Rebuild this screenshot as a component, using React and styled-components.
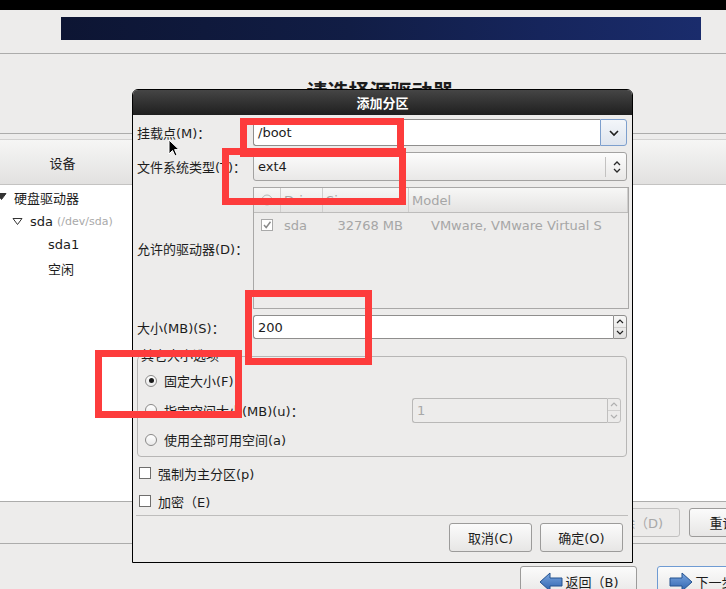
import styled, { createGlobalStyle } from "styled-components";

const GlobalStyle = createGlobalStyle`
  html, body {
    margin: 0;
    padding: 0;
    background: #edeceb;
    overflow: hidden;
  }
  body {
    font-family: "DejaVu Sans", "Noto Sans CJK SC", sans-serif;
    font-size: 13px;
    color: #1c1c1c;
  }
`;

const Screen = styled.div`
  position: relative;
  width: 726px;
  height: 589px;
  overflow: hidden;
  background: #edeceb;
`;

const TopBar = styled.div`
  height: 10px;
  background: #000;
`;

const BannerRow = styled.div`
  padding: 7px 0 13px 61px;
`;

const Banner = styled.div`
  width: 640px;
  height: 23px;
  background: linear-gradient(90deg, #0d1533 0%, #111d45 45%, #16255c 75%, #1a2c6c 100%);
`;

const Rule = styled.div`
  height: 1px;
  background: #acacab;
`;

const TitleRow = styled.div`
  height: 79px;
  box-sizing: border-box;
  padding: 25px 0 0 34px;
  text-align: center;
  font-size: 21px;
  line-height: 26px;
  font-weight: bold;
`;

const DevicePanel = styled.div`
  padding-top: 5px;
`;

const DeviceHeader = styled.div`
  height: 46px;
  box-sizing: border-box;
  display: flex;
  align-items: center;
  background: linear-gradient(#f6f6f5, #e2e1e0);
  border-top: 1px solid #d2d1d0;
  border-bottom: 1px solid #c4c3c2;
`;

const HeaderCell = styled.div`
  width: ${(p) => p.$w}px;
  text-align: center;
`;

const DeviceList = styled.div`
  height: 316px;
  padding-top: 1px;
  box-sizing: border-box;
  background: #fff;
`;

const TreeRow = styled.div`
  height: 23.5px;
  display: flex;
  align-items: center;
  padding-left: ${(p) => p.$indent}px;
  gap: 7px;
`;

const Hint = styled.span`
  color: #a9a9a9;
  font-size: 11px;
  margin-left: -3px;
`;

const ActionRow = styled.div`
  height: 41px;
  display: flex;
  align-items: center;
  gap: 9px;
  padding-left: 592px;
`;

const NavRow = styled.div`
  display: flex;
  gap: 20px;
  padding: 22px 0 0 520px;
`;

const PageButton = styled.div`
  flex: none;
  width: ${(p) => p.$w}px;
  height: ${(p) => p.$h}px;
  box-sizing: border-box;
  display: flex;
  align-items: center;
  justify-content: center;
  gap: 3px;
  border: 1px solid ${(p) => (p.$focus ? "#6f9bd3" : p.$disabled ? "#c2c1c0" : "#9c9b9a")};
  border-radius: 3px;
  background: ${(p) => (p.$disabled ? "#ecebea" : "linear-gradient(#fbfbfb, #e7e6e5)")};
  color: ${(p) => (p.$disabled ? "#a8a8a8" : "#1c1c1c")};
  white-space: nowrap;
`;

/* ---------- dialog ---------- */

const Dialog = styled.div`
  position: absolute;
  left: 132px;
  top: 89px;
  width: 501px;
  height: 474px;
  box-sizing: border-box;
  border: 1px solid #000;
  border-radius: 6px 6px 0 0;
  background: #edeceb;
  display: flex;
  flex-direction: column;
  overflow: hidden;
`;

const TitleBar = styled.div`
  height: 24px;
  flex: none;
  display: flex;
  align-items: center;
  justify-content: center;
  padding-bottom: 1px;
  background: linear-gradient(#454545, #1f1f1f);
  color: #fff;
  font-weight: bold;
  font-size: 13px;
`;

const Body = styled.div`
  padding: 4px 5px 0 4px;
  display: flex;
  flex-direction: column;
`;

const FormGrid = styled.div`
  display: grid;
  grid-template-columns: 116px 1fr;
  grid-template-rows: 27px 29px 122px 24px;
  row-gap: 6px;
  align-items: center;
`;

const Label = styled.div`
  white-space: nowrap;
`;

const ComboEntry = styled.div`
  height: 27px;
  display: flex;
`;

const EntryField = styled.div`
  flex: 1;
  box-sizing: border-box;
  display: flex;
  align-items: center;
  padding-left: 4px;
  background: ${(p) => (p.$disabled ? "#edeceb" : "#fff")};
  color: ${(p) => (p.$disabled ? "#a8a8a8" : "#1c1c1c")};
  border: 1px solid ${(p) => (p.$disabled ? "#b9b8b7" : "#8f8e8d")};
  border-right: none;
  border-radius: 3px 0 0 3px;
`;

const DropButton = styled.div`
  width: 27px;
  box-sizing: border-box;
  display: flex;
  align-items: center;
  justify-content: center;
  border: 1px solid #7d9fcd;
  border-radius: 0 3px 3px 0;
  background: linear-gradient(#f3f6fa, #dfe5ee);
`;

const ComboButton = styled.div`
  height: 29px;
  box-sizing: border-box;
  display: flex;
  align-items: center;
  padding-left: 4px;
  border: 1px solid #a3a2a1;
  border-radius: 3px;
  background: linear-gradient(#fcfcfc, #e9e8e7);
`;

const ComboText = styled.div`
  flex: 1;
`;

const ComboSep = styled.div`
  width: 1px;
  height: 20px;
  background: #c3c2c1;
  margin-right: 6px;
`;

const ComboIcon = styled.div`
  width: 14px;
  display: flex;
`;

const DriveTable = styled.div`
  height: 122px;
  box-sizing: border-box;
  border: 1px solid #a9a8a7;
  margin-right: -2px;
  color: #a6a6a6;
`;

const TableHead = styled.div`
  display: grid;
  grid-template-columns: 27px 42px 86px 1fr;
  height: 24px;
  background: linear-gradient(#f7f7f6, #e4e3e2);
  border-bottom: 1px solid #bdbcbb;
`;

const HeadCell = styled.div`
  display: flex;
  align-items: center;
  padding-left: ${(p) => p.$pad ?? 3}px;
  border-right: 1px solid #cfcecd;
  white-space: nowrap;
`;

const TableRow = styled.div`
  display: grid;
  grid-template-columns: 27px 42px 86px 1fr;
  height: 24px;
`;

const Cell = styled.div`
  display: flex;
  align-items: center;
  justify-content: ${(p) => (p.$right ? "flex-end" : "flex-start")};
  padding: 0 ${(p) => p.$pr ?? 0}px 0 ${(p) => p.$pl ?? 3}px;
  white-space: nowrap;
  overflow: hidden;
`;

const Spin = styled.div`
  height: ${(p) => p.$h}px;
  width: ${(p) => (p.$w ? `${p.$w}px` : "auto")};
  display: flex;
`;

const SpinButtons = styled.div`
  width: 14px;
  box-sizing: border-box;
  display: flex;
  flex-direction: column;
  border: 1px solid ${(p) => (p.$disabled ? "#c0bfbe" : "#8f8e8d")};
  border-radius: 0 3px 3px 0;
  background: ${(p) => (p.$disabled ? "#ecebea" : "linear-gradient(#f7f7f6, #e1e0df)")};
`;

const SpinHalf = styled.div`
  flex: 1;
  display: flex;
  align-items: center;
  justify-content: center;
  & + & {
    border-top: 1px solid ${(p) => (p.$disabled ? "#d0cfce" : "#b3b2b1")};
  }
`;

const Frame = styled.fieldset`
  margin: 9px 0 0 0;
  padding: 2px 5px 2px 7px;
  border: 1px solid #b7b6b5;
  border-radius: 4px;
  min-width: 0;
`;

const Legend = styled.legend`
  padding: 0 2px;
  margin-left: -6px;
  line-height: 16px;
`;

const OptionRow = styled.div`
  height: ${(p) => p.$h}px;
  display: flex;
  align-items: center;
  gap: 7px;
  padding-left: ${(p) => p.$pl ?? 0}px;
  margin-top: ${(p) => p.$mt ?? 0}px;
`;

const OptionText = styled.div`
  flex: 1;
  white-space: nowrap;
`;

const Radio = styled.div`
  width: 12px;
  height: 12px;
  box-sizing: border-box;
  border-radius: 50%;
  border: 1px solid #8a8988;
  background: linear-gradient(#ffffff, #e9e9e9);
  display: flex;
  align-items: center;
  justify-content: center;
  &::after {
    content: "";
    width: 5px;
    height: 5px;
    border-radius: 50%;
    background: ${(p) => (p.$on ? "#1a1a1a" : "transparent")};
  }
`;

const Check = styled.div`
  width: 12px;
  height: 12px;
  box-sizing: border-box;
  border: 1px solid ${(p) => (p.$disabled ? "#a9a9a9" : "#6f6e6d")};
  background: #fff;
  display: flex;
`;

const Separator = styled.div`
  height: 1px;
  margin: 2px -1px 0;
  background: #bebdbc;
`;

const DialogButtons = styled.div`
  display: flex;
  justify-content: flex-end;
  gap: 8px;
  padding: 7px 4px 0 0;
`;

/* ---------- overlays ---------- */

const Mark = styled.div`
  position: absolute;
  left: ${(p) => p.$x}px;
  top: ${(p) => p.$y}px;
  width: ${(p) => p.$w}px;
  height: ${(p) => p.$h}px;
  box-sizing: border-box;
  border: 7px solid #fd3c3c;
`;

const Pointer = styled.svg`
  position: absolute;
  left: 168px;
  top: 139px;
`;

function Expander({ filled }) {
  return (
    <svg width="11" height="11" viewBox="0 0 11 11">
      <polygon
        points="1,2.5 10,2.5 5.5,8.5"
        fill={filled ? "#333" : "#fff"}
        stroke="#333"
        strokeWidth="1"
        strokeLinejoin="round"
      />
    </svg>
  );
}

function NavArrow({ dir }) {
  const pts =
    dir === "left"
      ? "1,10 11,1 11,6 23,6 23,14 11,14 11,19"
      : "23,10 13,1 13,6 1,6 1,14 13,14 13,19";
  return (
    <svg width="24" height="20" viewBox="0 0 24 20">
      <defs>
        <linearGradient id={`g-${dir}`} x1="0" y1="0" x2="0" y2="1">
          <stop offset="0" stopColor="#7aa6e0" />
          <stop offset="1" stopColor="#2f63ae" />
        </linearGradient>
      </defs>
      <polygon points={pts} fill={`url(#g-${dir})`} stroke="#24528f" strokeWidth="1" strokeLinejoin="round" />
    </svg>
  );
}

function SpinArrow({ up, color }) {
  return (
    <svg width="8" height="5" viewBox="0 0 8 5">
      <path d={up ? "M1 4 L4 1 L7 4" : "M1 1 L4 4 L7 1"} fill="none" stroke={color} strokeWidth="1.2" />
    </svg>
  );
}

function SpinBox({ value, width, height, disabled }) {
  const c = disabled ? "#b0b0b0" : "#222";
  return (
    <Spin $w={width} $h={height}>
      <EntryField $disabled={disabled}>{value}</EntryField>
      <SpinButtons $disabled={disabled}>
        <SpinHalf $disabled={disabled}>
          <SpinArrow up color={c} />
        </SpinHalf>
        <SpinHalf $disabled={disabled}>
          <SpinArrow color={c} />
        </SpinHalf>
      </SpinButtons>
    </Spin>
  );
}

export default function App() {
  return (
    <>
      <GlobalStyle />
      <Screen>
        <TopBar />
        <BannerRow>
          <Banner />
        </BannerRow>
        <Rule />
        <TitleRow>请选择源驱动器</TitleRow>
        <Rule />
        <DevicePanel>
          <DeviceHeader>
            <HeaderCell $w={125}>设备</HeaderCell>
          </DeviceHeader>
          <DeviceList>
            <TreeRow $indent={0}>
              <span style={{ marginLeft: -4 }}>
                <Expander filled />
              </span>
              <span>硬盘驱动器</span>
            </TreeRow>
            <TreeRow $indent={12}>
              <Expander />
              <span>sda</span>
              <Hint>(/dev/sda)</Hint>
            </TreeRow>
            <TreeRow $indent={48}>sda1</TreeRow>
            <TreeRow $indent={48}>空闲</TreeRow>
          </DeviceList>
        </DevicePanel>
        <Rule />
        <ActionRow>
          <PageButton $w={88} $h={29} $disabled>
            删除（D)
          </PageButton>
          <PageButton $w={84} $h={29}>
            重设(s)
          </PageButton>
        </ActionRow>
        <Rule />
        <NavRow>
          <PageButton $w={117} $h={31}>
            <NavArrow dir="left" />
            返回（B)
          </PageButton>
          <PageButton $w={117} $h={31} $focus>
            <NavArrow dir="right" />
            下一步（N)
          </PageButton>
        </NavRow>

        <Dialog>
          <TitleBar>添加分区</TitleBar>
          <Body>
            <FormGrid>
              <Label>挂载点(M)：</Label>
              <ComboEntry>
                <EntryField>/boot</EntryField>
                <DropButton>
                  <svg width="12" height="8" viewBox="0 0 12 8">
                    <path d="M2 2 L6 6 L10 2" fill="none" stroke="#1f1f1f" strokeWidth="1.6" />
                  </svg>
                </DropButton>
              </ComboEntry>

              <Label>文件系统类型(T)：</Label>
              <ComboButton>
                <ComboText>ext4</ComboText>
                <ComboSep />
                <ComboIcon>
                  <svg width="10" height="14" viewBox="0 0 10 14">
                    <path d="M2 5 L5 2 L8 5 M2 9 L5 12 L8 9" fill="none" stroke="#2a2a2a" strokeWidth="1.3" />
                  </svg>
                </ComboIcon>
              </ComboButton>

              <Label>允许的驱动器(D)：</Label>
              <DriveTable>
                <TableHead>
                  <HeadCell $pad={7}>
                    <svg width="12" height="12" viewBox="0 0 12 12">
                      <circle cx="6" cy="6" r="5" fill="none" stroke="#b5b5b5" />
                    </svg>
                  </HeadCell>
                  <HeadCell>Drive</HeadCell>
                  <HeadCell>Size</HeadCell>
                  <HeadCell $pad={3}>Model</HeadCell>
                </TableHead>
                <TableRow>
                  <Cell $pl={7}>
                    <Check $disabled>
                      <svg width="10" height="10" viewBox="0 0 10 10">
                        <path d="M2 5 L4.2 7.5 L8.5 1.8" fill="none" stroke="#8a8a8a" strokeWidth="1.5" />
                      </svg>
                    </Check>
                  </Cell>
                  <Cell>sda</Cell>
                  <Cell $right $pr={6}>
                    32768 MB
                  </Cell>
                  <Cell $pl={22}>VMware, VMware Virtual S</Cell>
                </TableRow>
              </DriveTable>

              <Label>大小(MB)(S)：</Label>
              <SpinBox value="200" height={24} />
            </FormGrid>

            <Frame>
              <Legend>其它大小选项</Legend>
              <OptionRow $h={29}>
                <Radio $on />
                <OptionText>固定大小(F)</OptionText>
              </OptionRow>
              <OptionRow $h={30}>
                <Radio />
                <OptionText>指定空间大小(MB)(u)：</OptionText>
                <SpinBox value="1" width={209} height={25} disabled />
              </OptionRow>
              <OptionRow $h={29}>
                <Radio />
                <OptionText>使用全部可用空间(a)</OptionText>
              </OptionRow>
            </Frame>

            <OptionRow $h={24} $pl={2} $mt={4}>
              <Check />
              <OptionText>强制为主分区(p)</OptionText>
            </OptionRow>
            <OptionRow $h={24} $pl={2} $mt={4}>
              <Check />
              <OptionText>加密（E)</OptionText>
            </OptionRow>
            <Separator />
            <DialogButtons>
              <PageButton $w={83} $h={29}>
                取消(C)
              </PageButton>
              <PageButton $w={83} $h={29}>
                确定(O)
              </PageButton>
            </DialogButtons>
          </Body>
        </Dialog>

        <Mark $x={240} $y={118} $w={164} $h={39} />
        <Mark $x={222} $y={148} $w={184} $h={57} />
        <Mark $x={245} $y={290} $w={127} $h={75} />
        <Mark $x={95} $y={350} $w={147} $h={68} />

        <Pointer width="13" height="19" viewBox="0 0 13 19">
          <path
            d="M1 1 L1 15 L4.5 11.5 L7 17 L9 16 L6.6 10.6 L11 10.6 Z"
            fill="#000"
            stroke="#fff"
            strokeWidth="1"
            strokeLinejoin="round"
          />
        </Pointer>
      </Screen>
    </>
  );
}
